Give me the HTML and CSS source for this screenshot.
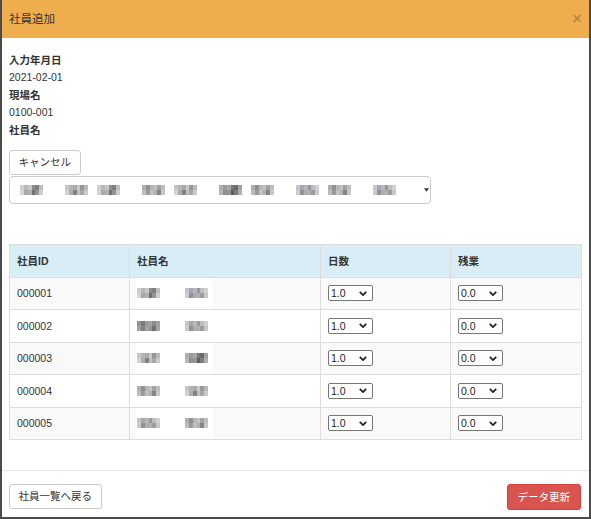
FILE: index.html
```html
<!DOCTYPE html>
<html lang="ja">
<head>
<meta charset="utf-8">
<title>社員追加</title>
<link rel="stylesheet" href="styles.css">
</head>
<body>
<svg class="defs" aria-hidden="true">
  <symbol id="s1" viewBox="0 0 24 10" shape-rendering="crispEdges">
    <rect x="0" y="0" width="4" height="5" fill="#e0e0e0"/><rect x="4" y="0" width="4" height="5" fill="#c8c8c8"/><rect x="8" y="0" width="4" height="5" fill="#d8d8d8"/><rect x="12" y="0" width="4" height="5" fill="#9a9a9a"/><rect x="16" y="0" width="4" height="5" fill="#8a8a8a"/><rect x="20" y="0" width="4" height="5" fill="#d0d0d0"/>
    <rect x="0" y="5" width="4" height="5" fill="#e8e8e8"/><rect x="4" y="5" width="4" height="5" fill="#b8b8b8"/><rect x="8" y="5" width="4" height="5" fill="#c0c0c0"/><rect x="12" y="5" width="4" height="5" fill="#7a7a7a"/><rect x="16" y="5" width="4" height="5" fill="#a0a0a0"/><rect x="20" y="5" width="4" height="5" fill="#e0e0e0"/>
  </symbol>
  <symbol id="s2" viewBox="0 0 24 10" shape-rendering="crispEdges">
    <rect x="0" y="0" width="4" height="5" fill="#bdbdbd"/><rect x="4" y="0" width="4" height="5" fill="#9c9c9c"/><rect x="8" y="0" width="4" height="5" fill="#c6c6c6"/><rect x="12" y="0" width="4" height="5" fill="#d4d4d4"/><rect x="16" y="0" width="4" height="5" fill="#b0b0b0"/><rect x="20" y="0" width="4" height="5" fill="#cfcfcf"/>
    <rect x="0" y="5" width="4" height="5" fill="#cccccc"/><rect x="4" y="5" width="4" height="5" fill="#a8a8a8"/><rect x="8" y="5" width="4" height="5" fill="#d2d2d2"/><rect x="12" y="5" width="4" height="5" fill="#c0c0c0"/><rect x="16" y="5" width="4" height="5" fill="#909090"/><rect x="20" y="5" width="4" height="5" fill="#d8d8d8"/>
  </symbol>
  <symbol id="s3" viewBox="0 0 24 10" shape-rendering="crispEdges">
    <rect x="0" y="0" width="4" height="5" fill="#d6d6d6"/><rect x="4" y="0" width="4" height="5" fill="#c4c4c4"/><rect x="8" y="0" width="4" height="5" fill="#b8b8b8"/><rect x="12" y="0" width="4" height="5" fill="#dcdcdc"/><rect x="16" y="0" width="4" height="5" fill="#a4a4a4"/><rect x="20" y="0" width="4" height="5" fill="#c9c9c9"/>
    <rect x="0" y="5" width="4" height="5" fill="#e4e4e4"/><rect x="4" y="5" width="4" height="5" fill="#bcbcbc"/><rect x="8" y="5" width="4" height="5" fill="#8c8c8c"/><rect x="12" y="5" width="4" height="5" fill="#d0d0d0"/><rect x="16" y="5" width="4" height="5" fill="#b4b4b4"/><rect x="20" y="5" width="4" height="5" fill="#dddddd"/>
  </symbol>
  <symbol id="s4" viewBox="0 0 24 10" shape-rendering="crispEdges">
    <rect x="0" y="0" width="4" height="5" fill="#d8d4dc"/><rect x="4" y="0" width="4" height="5" fill="#b9b1c0"/><rect x="8" y="0" width="4" height="5" fill="#c8c8c8"/><rect x="12" y="0" width="4" height="5" fill="#a8a2ae"/><rect x="16" y="0" width="4" height="5" fill="#cfcfcf"/><rect x="20" y="0" width="4" height="5" fill="#e2e2e2"/>
    <rect x="0" y="5" width="4" height="5" fill="#dedede"/><rect x="4" y="5" width="4" height="5" fill="#a29aa8"/><rect x="8" y="5" width="4" height="5" fill="#bdbdbd"/><rect x="12" y="5" width="4" height="5" fill="#c4bdc9"/><rect x="16" y="5" width="4" height="5" fill="#aaaaaa"/><rect x="20" y="5" width="4" height="5" fill="#d9d9d9"/>
  </symbol>
</svg>

<div class="modal">
  <div class="modal-header">
    <span class="title">社員追加</span>
    <span class="close">×</span>
  </div>

  <div class="modal-body">
    <dl class="info">
      <dt>入力年月日</dt>
      <dd>2021-02-01</dd>
      <dt>現場名</dt>
      <dd>0100-001</dd>
      <dt>社員名</dt>
    </dl>

    <div class="actions">
      <button class="btn">キャンセル</button>
    </div>

    <div class="picker">
      <span class="group"><svg class="blob"><use href="#s1"/></svg></span>
      <span class="group"><svg class="blob"><use href="#s3"/></svg><svg class="blob"><use href="#s1"/></svg></span>
      <span class="group"><svg class="blob"><use href="#s2"/></svg><svg class="blob"><use href="#s3"/></svg></span>
      <span class="group"><svg class="blob dark"><use href="#s1"/></svg><svg class="blob"><use href="#s2"/></svg></span>
      <span class="group"><svg class="blob"><use href="#s4"/></svg><svg class="blob"><use href="#s2"/></svg></span>
      <span class="group"><svg class="blob"><use href="#s4"/></svg></span>
      <svg class="caret" viewBox="0 0 6 4"><path d="M0 0H6L3 4Z" fill="#333"/></svg>
    </div>

    <table class="grid">
      <colgroup>
        <col class="c-id"><col class="c-name"><col class="c-days"><col class="c-over">
      </colgroup>
      <thead>
        <tr><th>社員ID</th><th>社員名</th><th>日数</th><th>残業</th></tr>
      </thead>
      <tbody>
        <tr>
          <td>000001</td>
          <td class="name-cell"><div class="name"><svg class="blob"><use href="#s1"/></svg><svg class="blob"><use href="#s4"/></svg></div></td>
          <td><span class="sel">1.0<svg class="chev" viewBox="0 0 10 6"><path d="M1 1l4 4 4-4" /></svg></span></td>
          <td><span class="sel">0.0<svg class="chev" viewBox="0 0 10 6"><path d="M1 1l4 4 4-4" /></svg></span></td>
        </tr>
        <tr>
          <td>000002</td>
          <td class="name-cell"><div class="name"><svg class="blob dark"><use href="#s2"/></svg><svg class="blob"><use href="#s4"/></svg></div></td>
          <td><span class="sel">1.0<svg class="chev" viewBox="0 0 10 6"><path d="M1 1l4 4 4-4" /></svg></span></td>
          <td><span class="sel">0.0<svg class="chev" viewBox="0 0 10 6"><path d="M1 1l4 4 4-4" /></svg></span></td>
        </tr>
        <tr>
          <td>000003</td>
          <td class="name-cell"><div class="name"><svg class="blob"><use href="#s3"/></svg><svg class="blob dark"><use href="#s1"/></svg></div></td>
          <td><span class="sel">1.0<svg class="chev" viewBox="0 0 10 6"><path d="M1 1l4 4 4-4" /></svg></span></td>
          <td><span class="sel">0.0<svg class="chev" viewBox="0 0 10 6"><path d="M1 1l4 4 4-4" /></svg></span></td>
        </tr>
        <tr>
          <td>000004</td>
          <td class="name-cell"><div class="name"><svg class="blob"><use href="#s2"/></svg><svg class="blob"><use href="#s3"/></svg></div></td>
          <td><span class="sel">1.0<svg class="chev" viewBox="0 0 10 6"><path d="M1 1l4 4 4-4" /></svg></span></td>
          <td><span class="sel">0.0<svg class="chev" viewBox="0 0 10 6"><path d="M1 1l4 4 4-4" /></svg></span></td>
        </tr>
        <tr>
          <td>000005</td>
          <td class="name-cell"><div class="name"><svg class="blob"><use href="#s4"/></svg><svg class="blob"><use href="#s2"/></svg></div></td>
          <td><span class="sel">1.0<svg class="chev" viewBox="0 0 10 6"><path d="M1 1l4 4 4-4" /></svg></span></td>
          <td><span class="sel">0.0<svg class="chev" viewBox="0 0 10 6"><path d="M1 1l4 4 4-4" /></svg></span></td>
        </tr>
      </tbody>
    </table>
  </div>

  <div class="modal-footer">
    <button class="btn">社員一覧へ戻る</button>
    <button class="btn btn-danger">データ更新</button>
  </div>
</div>
</body>
</html>
```

FILE: styles.css
```css
* { box-sizing: border-box; }

html, body {
  margin: 0;
  padding: 0;
  background: #fff;
}

body {
  font-family: "Liberation Sans", "Noto Sans CJK JP", sans-serif;
  font-size: 10.5px;
  color: #333;
}

.defs {
  display: block;
  width: 0;
  height: 0;
  overflow: hidden;
}

.modal {
  width: 591px;
  height: 519px;
  border: 2px solid #4a4a4a;
  border-top: 0;
  display: flex;
  flex-direction: column;
  background: #fff;
}

.modal-header {
  height: 38px;
  flex: none;
  background: #f0ad4e;
  display: flex;
  align-items: center;
  justify-content: space-between;
  padding: 0 7px 1px 7px;
}

.title {
  font-size: 11.5px;
  line-height: 14px;
  color: #333;
}

.close {
  font-size: 17px;
  font-weight: bold;
  line-height: 14px;
  color: rgba(0, 0, 0, 0.22);
}

.modal-body {
  flex: 1;
  padding: 14px 8px 0 7px;
}

.info {
  margin: 0;
  line-height: 17.4px;
}

.info dt {
  font-weight: bold;
}

.info dd {
  margin: 0;
}

.actions {
  margin-top: 11px;
  display: flex;
}

.btn {
  font-family: inherit;
  font-size: 10.5px;
  color: #333;
  background: #fff;
  border: 1px solid #ccc;
  border-radius: 3px;
  height: 25px;
  padding: 0 8.5px;
  display: inline-flex;
  align-items: center;
  line-height: 1;
}

.btn-danger {
  background: #d9534f;
  border-color: #d43f3a;
  color: #fff;
  height: 26px;
  padding: 0 10px;
}

.picker {
  margin-top: 1px;
  width: 422px;
  height: 28px;
  border: 1px solid #ccc;
  border-radius: 4px;
  display: flex;
  align-items: center;
  gap: 22px;
  padding-left: 10px;
}

.group {
  display: flex;
  gap: 9px;
}

.blob {
  display: block;
  width: 23px;
  height: 10px;
  filter: blur(0.6px) brightness(0.92);
}

.blob.dark {
  filter: blur(0.6px) brightness(0.78);
}

.caret {
  width: 5px;
  height: 4px;
  margin-left: 6px;
}

.grid {
  margin-top: 40px;
  width: 572px;
  border-collapse: collapse;
  table-layout: fixed;
  border: 1px solid #ddd;
}

.c-id { width: 120px; }
.c-name { width: 191px; }
.c-days { width: 130px; }
.c-over { width: 131px; }

.grid th,
.grid td {
  border: 1px solid #ddd;
  height: 32.5px;
  padding: 0 7px;
  text-align: left;
  vertical-align: middle;
  line-height: 14px;
}

.grid th {
  background: #d9edf7;
  font-weight: bold;
}

.grid tbody tr:nth-child(odd) td {
  background: #f9f9f9;
}

.grid td.name-cell {
  padding: 0 6px;
}

.name {
  width: 77px;
  height: 31px;
  background: #fff;
  display: flex;
  align-items: center;
  gap: 25px;
  padding-left: 1px;
}

.sel {
  display: inline-flex;
  align-items: center;
  justify-content: space-between;
  width: 45px;
  height: 16px;
  border: 1px solid #767676;
  border-radius: 2px;
  background: #fff;
  padding: 0 5px 0 2px;
  font-size: 10.5px;
  line-height: 1;
  color: #222;
}

.chev {
  width: 8px;
  height: 5px;
}

.chev path {
  fill: none;
  stroke: #222;
  stroke-width: 2.2;
}

.modal-footer {
  height: 47px;
  flex: none;
  border-top: 1px solid #e5e5e5;
  padding: 13px 8px 0 7px;
  display: flex;
  justify-content: space-between;
  align-items: flex-start;
}
```
